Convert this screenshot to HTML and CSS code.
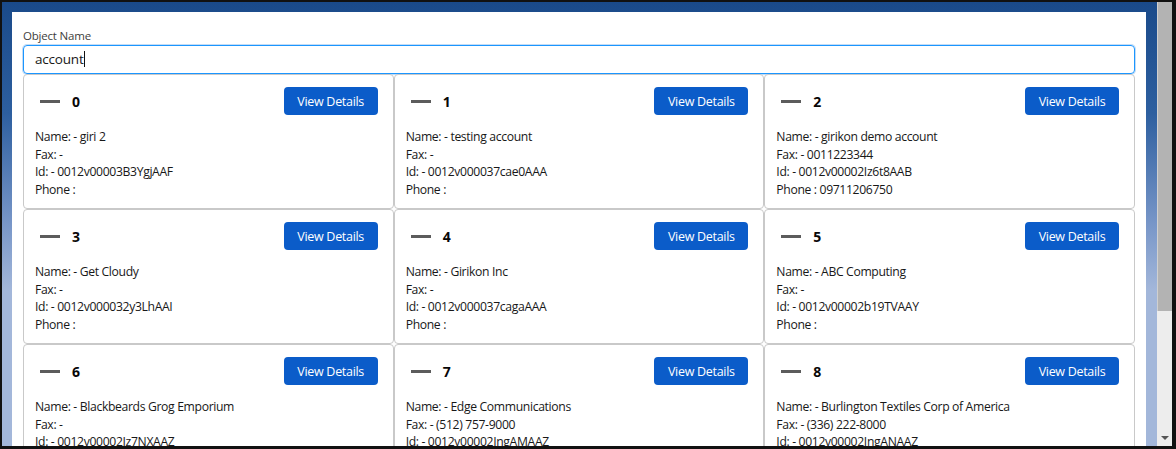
FILE: index.html
```html
<!DOCTYPE html>
<html lang="en">
<head>
  <meta charset="UTF-8" />
  <title>Object Records</title>
  <link rel="stylesheet" href="styles.css">
</head>
<body>
  <div class="frame">
    <div class="stage">
      <div class="panel">
        <!-- Champ de recherche -->
        <div class="field-label">Object Name</div>
        <div class="search-input">account<span class="caret"></span></div>

        <!-- Grille des enregistrements -->
        <div class="grid">
          <div class="card">
            <div class="card-head">
              <div class="card-title"><span class="dash"></span><span class="num">0</span></div>
              <button class="btn">View Details</button>
            </div>
            <div class="card-body">
              <div>Name: - giri 2</div>
              <div>Fax: -</div>
              <div>Id: - 0012v00003B3YgjAAF</div>
              <div>Phone :</div>
            </div>
          </div>
          <div class="card">
            <div class="card-head">
              <div class="card-title"><span class="dash"></span><span class="num">1</span></div>
              <button class="btn">View Details</button>
            </div>
            <div class="card-body">
              <div>Name: - testing account</div>
              <div>Fax: -</div>
              <div>Id: - 0012v000037cae0AAA</div>
              <div>Phone :</div>
            </div>
          </div>
          <div class="card">
            <div class="card-head">
              <div class="card-title"><span class="dash"></span><span class="num">2</span></div>
              <button class="btn">View Details</button>
            </div>
            <div class="card-body">
              <div>Name: - girikon demo account</div>
              <div>Fax: - 0011223344</div>
              <div>Id: - 0012v00002Iz6t8AAB</div>
              <div>Phone : 09711206750</div>
            </div>
          </div>
          <div class="card">
            <div class="card-head">
              <div class="card-title"><span class="dash"></span><span class="num">3</span></div>
              <button class="btn">View Details</button>
            </div>
            <div class="card-body">
              <div>Name: - Get Cloudy</div>
              <div>Fax: -</div>
              <div>Id: - 0012v000032y3LhAAI</div>
              <div>Phone :</div>
            </div>
          </div>
          <div class="card">
            <div class="card-head">
              <div class="card-title"><span class="dash"></span><span class="num">4</span></div>
              <button class="btn">View Details</button>
            </div>
            <div class="card-body">
              <div>Name: - Girikon Inc</div>
              <div>Fax: -</div>
              <div>Id: - 0012v000037cagaAAA</div>
              <div>Phone :</div>
            </div>
          </div>
          <div class="card">
            <div class="card-head">
              <div class="card-title"><span class="dash"></span><span class="num">5</span></div>
              <button class="btn">View Details</button>
            </div>
            <div class="card-body">
              <div>Name: - ABC Computing</div>
              <div>Fax: -</div>
              <div>Id: - 0012v00002b19TVAAY</div>
              <div>Phone :</div>
            </div>
          </div>
          <div class="card">
            <div class="card-head">
              <div class="card-title"><span class="dash"></span><span class="num">6</span></div>
              <button class="btn">View Details</button>
            </div>
            <div class="card-body">
              <div>Name: - Blackbeards Grog Emporium</div>
              <div>Fax: -</div>
              <div>Id: - 0012v00002Iz7NXAAZ</div>
              <div>Phone :</div>
            </div>
          </div>
          <div class="card">
            <div class="card-head">
              <div class="card-title"><span class="dash"></span><span class="num">7</span></div>
              <button class="btn">View Details</button>
            </div>
            <div class="card-body">
              <div>Name: - Edge Communications</div>
              <div>Fax: - (512) 757-9000</div>
              <div>Id: - 0012v00002IngAMAAZ</div>
              <div>Phone :</div>
            </div>
          </div>
          <div class="card">
            <div class="card-head">
              <div class="card-title"><span class="dash"></span><span class="num">8</span></div>
              <button class="btn">View Details</button>
            </div>
            <div class="card-body">
              <div>Name: - Burlington Textiles Corp of America</div>
              <div>Fax: - (336) 222-8000</div>
              <div>Id: - 0012v00002IngANAAZ</div>
              <div>Phone :</div>
            </div>
          </div>
        </div>
      </div>
    </div>

    <!-- Barre de défilement -->
    <div class="scrollbar">
      <div class="thumb"></div>
      <div class="track"><span class="arrow"></span></div>
    </div>
  </div>
</body>
</html>
```

FILE: styles.css
```css
/* Page sans marge, police proche de Salesforce Sans */
body {
  margin: 0;
  font-family: "Open Sans", "Noto Sans", Arial, sans-serif;
  color: #181818;
  overflow: hidden;
}

/* Cadre noir autour de la capture */
.frame {
  width: 1176px;
  height: 449px;
  box-sizing: border-box;
  border-top: 2px solid #111;
  border-left: 2px solid #111;
  border-right: 4px solid #111;
  border-bottom: 3px solid #111;
  display: flex;
  overflow: hidden;
}

/* Fond bleu derrière le panneau blanc */
.stage {
  flex: 1;
  padding: 10px 11px 0 10px;
  background: linear-gradient(180deg, #1a4a8a 0%, #2d5f9f 25%, #7896c8 50%, #a3b7da 65%, #a3b7da 100%);
  overflow: hidden;
}

.panel {
  background: #fff;
  height: 100%;
  padding: 17px 11px 0 11px;
  box-sizing: border-box;
}

.field-label {
  font-size: 11.5px;
  letter-spacing: -0.2px;
  color: #3e3e3c;
  line-height: 14px;
  margin-bottom: 2px;
}

/* Faux champ texte avec le curseur */
.search-input {
  height: 29px;
  box-sizing: border-box;
  border: 1px solid #1b96ff;
  border-radius: 4px;
  box-shadow: 0 0 0 1px #c4dcf5;
  padding: 0 11px;
  font-size: 13.5px;
  letter-spacing: -0.2px;
  line-height: 27px;
  color: #181818;
}

.caret {
  display: inline-block;
  width: 1px;
  height: 16px;
  background: #111;
  vertical-align: -3px;
}

/* Trois colonnes de cartes */
.grid {
  display: grid;
  grid-template-columns: repeat(3, 1fr);
}

.card {
  border: 1px solid #c9c9c9;
  border-radius: 4px;
  padding: 12px 15px 12px 11px;
  height: 135px;
  box-sizing: border-box;
}

.card-head {
  display: flex;
  justify-content: space-between;
  align-items: center;
  height: 28px;
}

.card-title {
  display: flex;
  align-items: center;
}

.dash {
  width: 20px;
  height: 3px;
  background: #5c5c5c;
  margin-left: 5px;
  margin-right: 12px;
}

.num {
  font-weight: bold;
  font-size: 14px;
  color: #080707;
}

.btn {
  background-color: #0b5cc9;
  color: #fff;
  border: none;
  border-radius: 4px;
  height: 28px;
  width: 94px;
  padding: 0;
  font-family: inherit;
  font-size: 12.5px;
  letter-spacing: -0.3px;
  cursor: pointer;
}

.card-body {
  margin-top: 13px;
  font-size: 12.2px;
  letter-spacing: -0.35px;
  line-height: 17.6px;
  color: #181818;
}

/* Barre de défilement dessinée à la main */
.scrollbar {
  width: 15px;
  display: flex;
  flex-direction: column;
  background: #ededed;
}

.thumb {
  height: 309px;
  background: #b3b3b3;
  border-left: 1px solid #d0d0d0;
}

.track {
  flex: 1;
  display: flex;
  align-items: flex-end;
  justify-content: center;
  padding-bottom: 6px;
}

.arrow {
  width: 0;
  height: 0;
  border-left: 4px solid transparent;
  border-right: 4px solid transparent;
  border-top: 4px solid #555;
}
```
